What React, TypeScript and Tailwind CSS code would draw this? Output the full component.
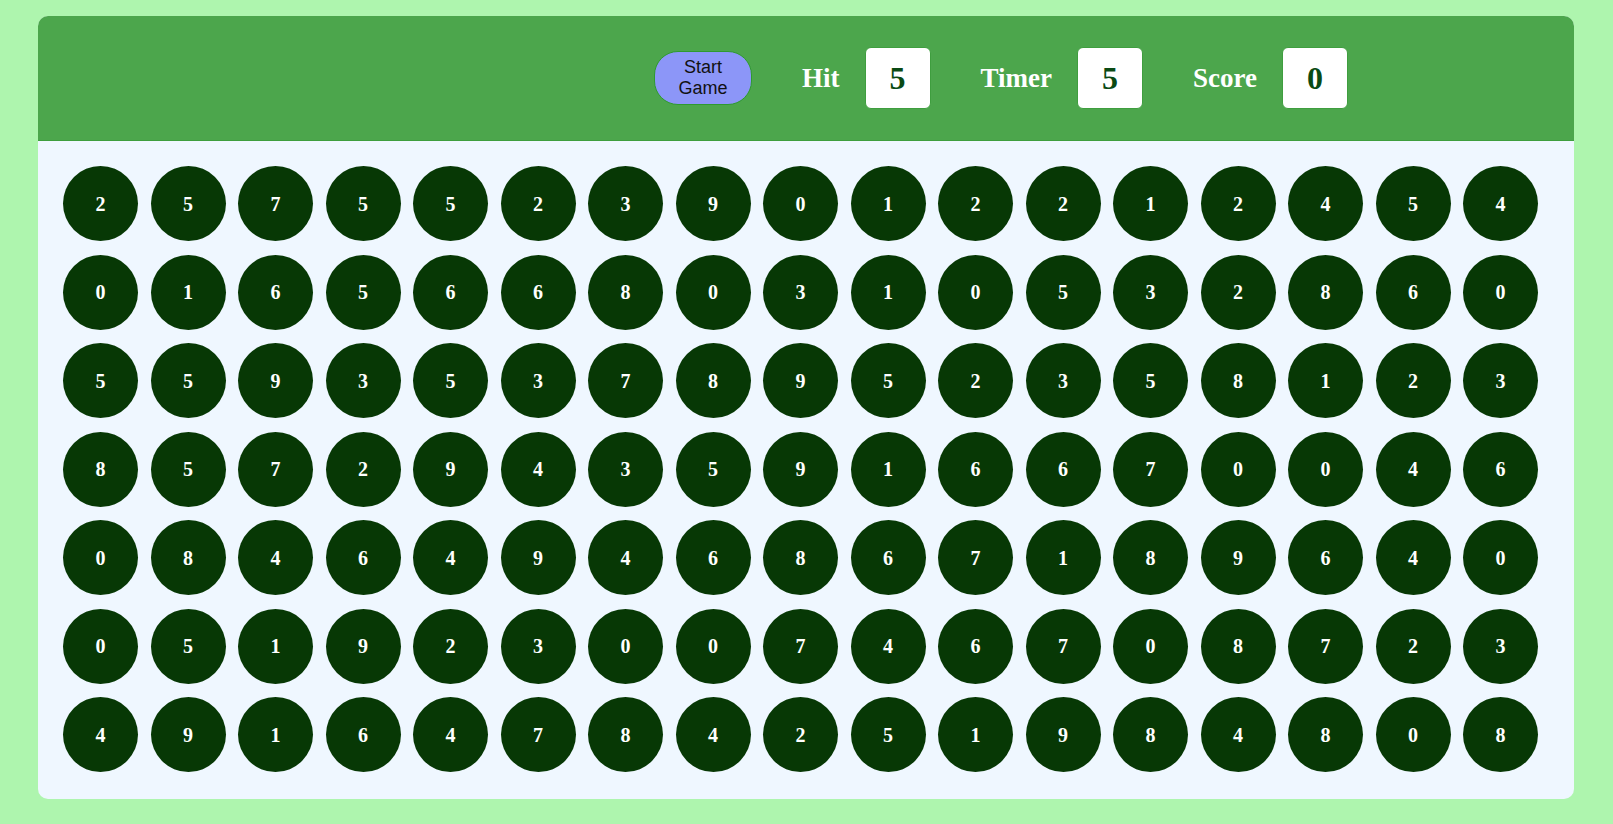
import React from "react";

const rows = [
  "25755239012212454",
  "01656680310532860",
  "55935378952358123",
  "85729435916670046",
  "08464946867189640",
  "05192300746708723",
  "49164784251984808",
];

function Stat({ label, value }: { label: string; value: string }) {
  return (
    <div className="flex items-center gap-[25px]">
      <span className="text-[27px] font-bold text-white leading-none">{label}</span>
      <div className="w-[66px] h-[62px] bg-white rounded-[6px] border border-[#3f9e3f] flex items-center justify-center text-[32px] font-bold text-[#0a4a14] leading-none">
        {value}
      </div>
    </div>
  );
}

export default function App() {
  return (
    <div className="min-h-[824px] bg-[#aef5ae] pt-[16px] pl-[38px] pb-[25px] font-['Liberation_Serif',serif]">
      <div className="w-[1536px] h-[783px] rounded-[10px] bg-[#eff7ff] flex flex-col overflow-hidden">
        <div className="h-[125px] bg-[#4ca64c] border-b border-[#3e9e3e] flex items-center justify-end pr-[226px] shrink-0">
          <button className="w-[98px] h-[54px] rounded-[24px] bg-[#8c96f8] border border-[#2f9a2f] text-[18px] leading-[21px] text-[#111] font-['Liberation_Sans',Arial,sans-serif] mr-[50px]">
            Start
            <br />
            Game
          </button>
          <div className="flex items-center gap-[50px]">
            <Stat label="Hit" value="5" />
            <Stat label="Timer" value="5" />
            <Stat label="Score" value="0" />
          </div>
        </div>
        <div className="pt-[25px] pl-[25px]">
          <div className="grid grid-cols-[repeat(17,75px)] gap-x-[12.5px] gap-y-[13.5px]">
            {rows.flatMap((r, ri) =>
              r.split("").map((d, ci) => (
                <div
                  key={`${ri}-${ci}`}
                  className="w-[75px] h-[75px] rounded-full bg-[#073805] flex items-center justify-center text-white font-bold text-[20px] leading-none"
                >
                  {d}
                </div>
              ))
            )}
          </div>
        </div>
      </div>
    </div>
  );
}
